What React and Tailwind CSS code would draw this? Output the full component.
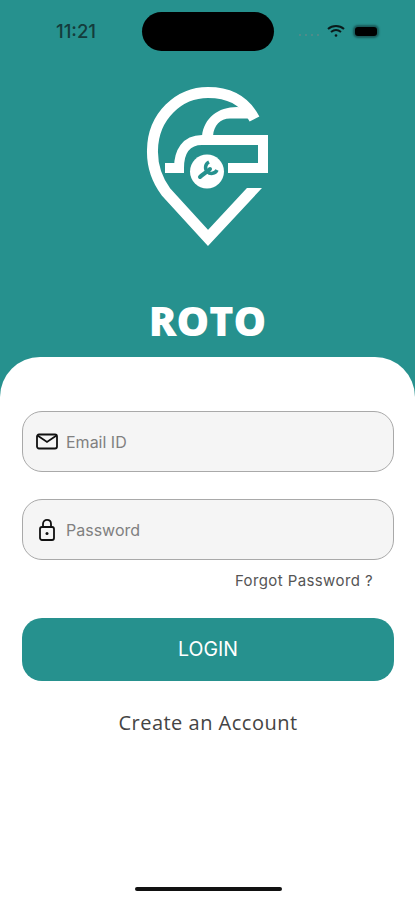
import React from "react";

function Logo() {
  return (
    <svg width="155" height="190" viewBox="0 0 155 190" fill="none" stroke="#ffffff" strokeWidth="10">
      <path strokeWidth="11" d="M131 111 L78 168 L36 122 C27 110 22 97 22.500 80 C23 46 49 22.500 78 22.500 C98 22.500 114 29 124.500 49" />
      <path fill="#26918e" stroke="none" d="M110 104 H140 V118 H110 Z" />
      <path fill="#ffffff" stroke="none" d="M107 37 C88 37 74 48 72 66 H83 C84 55 90 48.500 100 48.500 H124 L116 38 Z" />
      <path d="M35 98 H49 C49 82 56 70 72 70 H133 V98 H98" />
      <path fill="#ffffff" stroke="none" d="M72 65 H138 V75 H72 Z" />
      <circle cx="77" cy="101.500" r="17" fill="#ffffff" stroke="none" />
      <path d="M70 107 C73 104 77 102 80 99" stroke="#26918e" strokeWidth="4" strokeLinecap="round" />
      <path d="M79 92 A6 6 0 1 0 87 100" stroke="#26918e" strokeWidth="3.500" />
    </svg>
  );
}

function Field({ icon, label, className }) {
  return (
    <div className={"flex h-[61px] items-center rounded-[20px] border border-[#a9a9a9] bg-[#f5f5f5] pl-[13px] " + className}>
      <span className="flex w-[30px] shrink-0 justify-start">{icon}</span>
      <span className="font-['Inter',sans-serif] text-[16px] text-[#808080]">{label}</span>
    </div>
  );
}

export default function App() {
  return (
    <div className="relative h-[900px] w-[415px] overflow-hidden bg-[#26918e]">
      <div className="relative h-[357px]">
        <div className="flex items-center justify-between pt-[12px] pl-[56px] pr-[38px]">
          <span className="font-['Inter',sans-serif] text-[18.500px] font-medium leading-[38px] text-[#143c3c]">11:21</span>
          <div className="flex items-center">
            <div className="mt-[8px] flex gap-[4px]">
              <span className="h-[2px] w-[2px] rounded-full bg-[#5c8a88]" />
              <span className="h-[2px] w-[2px] rounded-full bg-[#5c8a88]" />
              <span className="h-[2px] w-[2px] rounded-full bg-[#5c8a88]" />
              <span className="h-[2px] w-[2px] rounded-full bg-[#5c8a88]" />
            </div>
            <svg width="18" height="14" viewBox="0 0 18 14" fill="none" stroke="#0a1a1a" strokeWidth="2" className="ml-[8px] mb-[1px]">
              <path d="M1 5 C5.500 1 12.500 1 17 5" />
              <path d="M4 8 C7 5.500 11 5.500 14 8" />
              <circle cx="9" cy="11.500" r="1.300" fill="#0a1a1a" stroke="none" />
            </svg>
            <div className="ml-[10px] h-[9px] w-[22px] rounded-[3px] bg-black shadow-[0_0_2px_2px_#1a5a5a]" />
          </div>
        </div>
        <div className="absolute top-[12px] left-[142px] h-[39px] w-[132px] rounded-full bg-black" />
        <div className="absolute top-[70px] left-[130px]">
          <Logo />
        </div>
        <div className="absolute top-[292px] w-full text-center font-['Open_Sans',sans-serif] text-[41px] font-extrabold leading-[56px] text-white">
          ROTO
        </div>
      </div>
      <div className="h-[543px] rounded-t-[40px] bg-white pl-[22px] pr-[21px] pt-[54px]">
        <Field
          label="Email ID"
          icon={
            <svg width="22" height="17" viewBox="0 0 22 17" fill="none" stroke="#111111" strokeWidth="1.800">
              <rect x="1" y="1.500" width="20" height="14" rx="2" />
              <path d="M1.500 2.500 L11 9 L20.500 2.500" />
            </svg>
          }
        />
        <Field
          className="mt-[27px]"
          label="Password"
          icon={
            <svg width="18" height="23" viewBox="0 0 18 23" fill="none" stroke="#111111" strokeWidth="1.800" className="ml-[2px]">
              <rect x="2" y="9" width="14" height="13" rx="2" />
              <path d="M5 9 V6 C5 0.500 13 0.500 13 6 V9" />
              <circle cx="9" cy="15.500" r="1.500" fill="#111111" stroke="none" />
            </svg>
          }
        />
        <div className="mt-[11px] pr-[21px] text-right font-['Inter',sans-serif] text-[15px] leading-[20px] tracking-[0.4px] text-[#555555]">
          Forgot Password ?
        </div>
        <div className="mt-[27px] flex h-[63px] items-center justify-center rounded-[20px] bg-[#26918e] font-['Inter',sans-serif] text-[19.500px] text-white">
          LOGIN
        </div>
        <div className="mt-[28px] text-center font-['Open_Sans',sans-serif] text-[20px] leading-[28px] tracking-[0.5px] text-[#444444]">
          Create an Account
        </div>
      </div>
      <div className="absolute top-[887px] left-[135px] h-[4px] w-[147px] rounded-full bg-[#111111]" />
    </div>
  );
}
